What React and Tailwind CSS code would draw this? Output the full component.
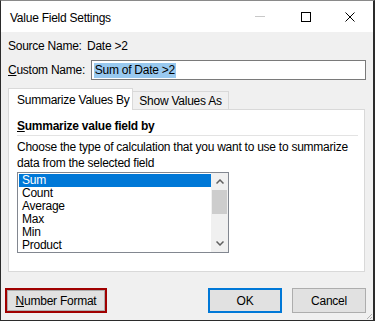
import React from 'react';

const items = ['Sum', 'Count', 'Average', 'Max', 'Min', 'Product'];

const font = { fontFamily: '"Liberation Sans", Arial, sans-serif' };

const App = () => {
  return (
    <div
      className="relative w-[375px] h-[321px] bg-[#f0f0f0] border-t border-t-[#8a8a8a] border-l border-r-2 border-b border-l-[#2b2b2b] border-r-[#2b2b2b] border-b-[#2b2b2b] text-[12px] tracking-[-0.25px] text-black flex flex-col"
      style={font}
    >
      {/* title bar */}
      <div className="h-[31px] bg-white flex items-center pl-[9px]">
        <span className="flex-1 leading-none mt-[2px]">Value Field Settings</span>
        <div className="flex items-center h-full">
          <div className="w-[46px] h-full flex items-center justify-center">
            <div className="w-[10px] h-px bg-[#c8c8c8]" />
          </div>
          <div className="w-[46px] h-full flex items-center justify-center">
            <div className="w-[10px] h-[10px] border border-black" />
          </div>
          <div className="w-[44px] h-full flex items-center justify-center pr-[2px]">
            <svg width="10" height="10" viewBox="0 0 10 10">
              <path d="M0.5 0.5 L9.5 9.5 M9.5 0.5 L0.5 9.5" stroke="#000" strokeWidth="1" />
            </svg>
          </div>
        </div>
      </div>

      {/* body */}
      <div className="flex-1 flex flex-col pl-[7px] pr-[7px]">
        <div className="mt-[6px] h-[16px] leading-[16px] flex">
          <span className="w-[79px] whitespace-nowrap">Source Name:</span>
          <span>Date &gt;2</span>
        </div>

        <div className="mt-[6px] h-[20px] flex items-center">
          <span className="w-[83px] whitespace-nowrap">
            <u>C</u>ustom Name:
          </span>
          <div className="w-[276px] h-[20px] bg-white border border-[#7a7a7a] flex items-center pl-[2px]">
            <span className="bg-[#99c9ef] leading-[15px] px-px">Sum of Date &gt;2</span>
          </div>
        </div>

        {/* tabs */}
        <div className="mt-[8px] flex items-end h-[21px]">
          <div className="relative z-10 w-[125px] h-[22px] -mb-px bg-white border border-b-0 border-[#d9d9d9] flex items-center pl-[8px] whitespace-nowrap">
            Summarize Values By
          </div>
          <div className="w-[96px] h-[18px] border border-l-0 border-b-0 border-[#d9d9d9] flex items-center justify-center whitespace-nowrap">
            Show Values As
          </div>
        </div>

        {/* panel */}
        <div className="w-[357px] h-[163px] bg-white border border-[#d9d9d9] pl-[8px] pr-[4px]">
          <div className="mt-[8px] h-[16px] leading-[16px] font-bold">
            <u>S</u>ummarize value field by
          </div>
          <div className="mt-px h-px bg-[#e3e3e3] mr-[2px]" />
          <div className="mt-[3px] leading-[16px]">
            Choose the type of calculation that you want to use to summarize data from the selected field
          </div>
          <div className="mt-px w-[212px] h-[81px] border border-[#828790] flex">
            <div className="flex-1 pl-px pt-px flex flex-col">
              {items.map((item, i) => (
                <div
                  key={item}
                  className={
                    i === 0
                      ? 'h-[13px] leading-[13px] pl-[3px] bg-[#0078d7] text-white'
                      : 'h-[13px] leading-[13px] pl-[3px]'
                  }
                >
                  {item}
                </div>
              ))}
            </div>
            <div className="w-[17px] h-full bg-[#f0f0f0] flex flex-col items-center">
              <div className="h-[17px] w-full flex items-center justify-center">
                <svg width="8" height="5" viewBox="0 0 8 5">
                  <path d="M0.5 4.5 L4 1 L7.5 4.5" stroke="#606060" strokeWidth="1.5" fill="none" />
                </svg>
              </div>
              <div className="w-[15px] h-[24px] bg-[#cdcdcd]" />
              <div className="flex-1" />
              <div className="h-[17px] w-full flex items-center justify-center">
                <svg width="8" height="5" viewBox="0 0 8 5">
                  <path d="M0.5 0.5 L4 4 L7.5 0.5" stroke="#606060" strokeWidth="1.5" fill="none" />
                </svg>
              </div>
            </div>
          </div>
        </div>

        {/* buttons */}
        <div className="mt-[16px] flex items-center">
          <div className="ml-[-3px] w-[102px] h-[25px] border-2 border-[#a00000]">
            <div className="w-full h-full bg-[#e1e1e1] border border-[#adadad] flex items-center justify-center">
              <span className="whitespace-nowrap">
                <u>N</u>umber Format
              </span>
            </div>
          </div>
          <div className="flex-1" />
          <div className="w-[74px] h-[25px] border-2 border-[#0078d7] bg-[#e1e1e1] flex items-center justify-center">
            OK
          </div>
          <div className="ml-[10px] w-[74px] h-[25px] border border-[#adadad] bg-[#e1e1e1] flex items-center justify-center">
            Cancel
          </div>
        </div>
      </div>

      {/* resize grip */}
      <svg className="absolute right-0 bottom-0" width="8" height="8" viewBox="0 0 8 8">
        <path d="M7 2 L2 7 M7 5 L5 7" stroke="#b0b0b0" strokeWidth="1" />
      </svg>
    </div>
  );
};

export default App;
